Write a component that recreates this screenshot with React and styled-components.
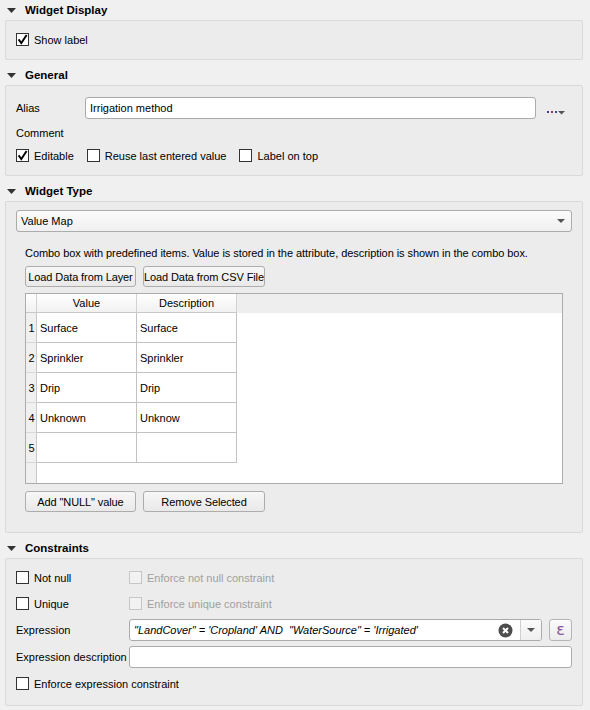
import React from 'react'
import styled, { createGlobalStyle } from 'styled-components'

const GlobalStyle = createGlobalStyle`
    html, body {
        margin: 0;
        background: #f0f0f0;
    }
    body {
        font-family: "Liberation Sans", Arial, sans-serif;
        font-size: 11px;
        color: #000;
    }
`

const Page = styled.div`
    width: 590px;
    height: 710px;
    overflow: hidden;
    box-sizing: border-box;
    padding: 0 7px 0 5px;
    margin-top: -1px;
`
const Section = styled.section`
    margin-top: 4px;
    &:first-child {
        margin-top: 0;
    }
`
const SectionHeader = styled.div`
    height: 21px;
    display: flex;
    align-items: center;
    padding-left: 2px;
`
const Caret = styled.svg`
    width: 9px;
    height: 5px;
    margin-right: 9px;
    margin-top: 1px;
`
const SectionTitle = styled.span`
    font-weight: bold;
    font-size: 11.5px;
`
const GroupBox = styled.div`
    background: #ececec;
    border: 1px solid #d9d9d9;
    border-radius: 2px;
    padding: ${p => p.$pad};
`
const Row = styled.div`
    display: flex;
    align-items: center;
    height: ${p => p.$h || 21}px;
    margin-top: ${p => p.$mt || 0}px;
    gap: ${p => p.$gap || 0}px;
`
const Label = styled.span`
    width: ${p => p.$w}px;
    flex: none;
    line-height: 16px;
    white-space: nowrap;
`
const CheckWrap = styled.label`
    display: inline-flex;
    align-items: center;
    gap: 5px;
    color: ${p => (p.$disabled ? '#a0a0a0' : '#000')};
    white-space: nowrap;
`
const Box = styled.span`
    width: 13px;
    height: 13px;
    box-sizing: border-box;
    border: 1px solid ${p => (p.$disabled ? '#c6c6c6' : '#333')};
    background: ${p => (p.$disabled ? '#f2f2f2' : '#fff')};
    display: inline-flex;
    align-items: center;
    justify-content: center;
    flex: none;
`
const TextInput = styled.div`
    flex: 1;
    height: 22px;
    box-sizing: border-box;
    background: #fff;
    border: 1px solid #ababab;
    border-radius: 3px;
    padding: 0 4px;
    display: flex;
    align-items: center;
`
const MoreButton = styled.div`
    width: 32px;
    flex: none;
    display: flex;
    align-items: center;
    justify-content: center;
    padding-top: 8px;
    padding-left: 4px;
`
const Combo = styled.div`
    height: 22px;
    box-sizing: border-box;
    border: 1px solid #acacac;
    border-radius: 3px;
    background: linear-gradient(#fbfbfb, #f0f0f0);
    display: flex;
    align-items: center;
    justify-content: space-between;
    padding: 0 6px 0 4px;
`
const Inner = styled.div`
    padding: 0 9px;
`
const Hint = styled.div`
    margin-top: 13px;
    line-height: 16px;
    letter-spacing: -0.06px;
    white-space: nowrap;
`
const ButtonRow = styled.div`
    display: flex;
    gap: 7px;
    margin-top: ${p => p.$mt}px;
`
const Button = styled.div`
    width: ${p => p.$w}px;
    height: 21px;
    box-sizing: border-box;
    border: 1px solid #adadad;
    border-radius: 3px;
    background: linear-gradient(#f7f7f7, #e9e9e9);
    display: flex;
    align-items: center;
    justify-content: center;
    white-space: nowrap;
    letter-spacing: -0.1px;
`
const Table = styled.div`
    margin-top: 6px;
    height: 191px;
    box-sizing: border-box;
    border: 1px solid #acacac;
    background: #fff;
    display: grid;
    grid-template-columns: 11px 100px 100px 1fr;
    grid-template-rows: 19px repeat(5, 30px) 1fr;
`
const HeadCell = styled.div`
    background: ${p => (p.$blank ? '#eeeeee' : 'linear-gradient(#ffffff, #f1f1f1)')};
    border-right: ${p => (p.$blank ? 'none' : '1px solid #d2d2d2')};
    border-bottom: ${p => (p.$blank ? 'none' : '1px solid #c8c8c8')};
    display: flex;
    align-items: center;
    justify-content: center;
`
const RowNum = styled.div`
    background: #f0f0f0;
    border-right: 1px solid #c8c8c8;
    border-bottom: ${p => (p.$last ? 'none' : '1px solid #d8d8d8')};
    display: flex;
    align-items: center;
    justify-content: center;
    padding-left: 1px;
`
const Cell = styled.div`
    border-right: 1px solid #c2c2c2;
    border-bottom: 1px solid #c2c2c2;
    display: flex;
    align-items: center;
    padding-left: 3px;
`
const Empty = styled.div``
const FormGrid = styled.div`
    display: grid;
    grid-template-columns: 113px 1fr;
    grid-template-rows: 21px 21px 22px 22px 21px;
    row-gap: 5px;
    align-items: center;
`
const FieldRow = styled.div`
    display: flex;
    gap: 7px;
    height: 22px;
`
const ExprBox = styled.div`
    flex: 1;
    height: 22px;
    box-sizing: border-box;
    border: 1px solid #ababab;
    border-radius: 3px;
    background: #fff;
    display: flex;
    align-items: center;
    overflow: hidden;
`
const ExprText = styled.span`
    flex: 1;
    font-style: italic;
    white-space: pre;
    padding-left: 4px;
`
const ClearIcon = styled.svg`
    width: 15px;
    height: 15px;
    margin-right: 7px;
`
const ExprDrop = styled.div`
    width: 20px;
    height: 100%;
    border-left: 1px solid #d0d0d0;
    background: linear-gradient(#fbfbfb, #efefef);
    display: flex;
    align-items: center;
    justify-content: center;
`
const EpsButton = styled.div`
    width: 23px;
    height: 22px;
    box-sizing: border-box;
    border: 1px solid #b5b5b5;
    border-radius: 3px;
    background: linear-gradient(#fbfbfb, #ececec);
    display: flex;
    align-items: center;
    justify-content: center;
    color: #86569a;
    font-family: "DejaVu Sans", sans-serif;
    font-size: 16px;
    line-height: 1;
`

const DownArrow = () => (
    <svg width="8" height="4" viewBox="0 0 8 4">
        <path d="M0 0 H8 L4 4 Z" fill="#555" />
    </svg>
)

const Tick = () => (
    <svg width="11" height="11" viewBox="0 0 11 11">
        <path d="M1.6 5.4 L4.3 9 L9.6 1" fill="none" stroke="#000" strokeWidth="1.9" />
    </svg>
)

const CheckBox = ({ checked, disabled, children }) => (
    <CheckWrap $disabled={disabled}>
        <Box $disabled={disabled}>{checked && <Tick />}</Box>
        {children}
    </CheckWrap>
)

const Header = ({ title }) => (
    <SectionHeader>
        <Caret viewBox="0 0 9 5">
            <path d="M0 0 H9 L4.5 5 Z" fill="#333" />
        </Caret>
        <SectionTitle>{title}</SectionTitle>
    </SectionHeader>
)

const rows = [
    ['Surface', 'Surface'],
    ['Sprinkler', 'Sprinkler'],
    ['Drip', 'Drip'],
    ['Unknown', 'Unknow'],
    ['', ''],
]

const App = () => {
    return (
        <Page>
            <GlobalStyle />
            <Section>
                <Header title="Widget Display" />
                <GroupBox $pad="8px 10px 9px">
                    <Row>
                        <CheckBox checked>Show label</CheckBox>
                    </Row>
                </GroupBox>
            </Section>

            <Section>
                <Header title="General" />
                <GroupBox $pad="11px 10px 9px">
                    <Row $h={22}>
                        <Label $w={69}>Alias</Label>
                        <TextInput>Irrigation method</TextInput>
                        <MoreButton>
                            <svg width="18" height="5" viewBox="0 0 18 5">
                                <rect x="0" y="1" width="2" height="2" fill="#4a3aa0" />
                                <rect x="4" y="1" width="2" height="2" fill="#7a3a6a" />
                                <rect x="8" y="1" width="2" height="2" fill="#3a4aa0" />
                                <path d="M11 1 H18 L14.5 4.5 Z" fill="#555" />
                            </svg>
                        </MoreButton>
                    </Row>
                    <Row $h={16} $mt={6}>
                        <Label>Comment</Label>
                    </Row>
                    <Row $mt={4} $gap={13}>
                        <CheckBox checked>Editable</CheckBox>
                        <CheckBox>Reuse last entered value</CheckBox>
                        <CheckBox>Label on top</CheckBox>
                    </Row>
                </GroupBox>
            </Section>

            <Section>
                <Header title="Widget Type" />
                <GroupBox $pad="8px 10px 20px">
                    <Combo>
                        <span>Value Map</span>
                        <DownArrow />
                    </Combo>
                    <Inner>
                        <Hint>
                            Combo box with predefined items. Value is stored in the attribute, description is shown in the combo box.
                        </Hint>
                        <ButtonRow $mt={5}>
                            <Button $w={111}>Load Data from Layer</Button>
                            <Button $w={122}>Load Data from CSV File</Button>
                        </ButtonRow>
                        <Table>
                            <HeadCell />
                            <HeadCell>Value</HeadCell>
                            <HeadCell>Description</HeadCell>
                            <HeadCell $blank />
                            {rows.map(([value, desc], i) => (
                                <React.Fragment key={i}>
                                    <RowNum>{i + 1}</RowNum>
                                    <Cell>{value}</Cell>
                                    <Cell>{desc}</Cell>
                                    <Empty />
                                </React.Fragment>
                            ))}
                            <RowNum $last />
                        </Table>
                        <ButtonRow $mt={7}>
                            <Button $w={111}>Add "NULL" value</Button>
                            <Button $w={122}>Remove Selected</Button>
                        </ButtonRow>
                    </Inner>
                </GroupBox>
            </Section>

            <Section>
                <Header title="Constraints" />
                <GroupBox $pad="8px 10px 11px">
                    <FormGrid>
                        <CheckBox>Not null</CheckBox>
                        <CheckBox disabled>Enforce not null constraint</CheckBox>
                        <CheckBox>Unique</CheckBox>
                        <CheckBox disabled>Enforce unique constraint</CheckBox>
                        <Label>Expression</Label>
                        <FieldRow>
                            <ExprBox>
                                <ExprText>"LandCover" = 'Cropland' AND  "WaterSource" = 'Irrigated'</ExprText>
                                <ClearIcon viewBox="0 0 15 15">
                                    <circle cx="7.5" cy="7.5" r="7" fill="#4d4d4d" />
                                    <path d="M5 5 L10 10 M10 5 L5 10" stroke="#fff" strokeWidth="2" />
                                </ClearIcon>
                                <ExprDrop>
                                    <DownArrow />
                                </ExprDrop>
                            </ExprBox>
                            <EpsButton>ɛ</EpsButton>
                        </FieldRow>
                        <Label>Expression description</Label>
                        <TextInput />
                        <CheckBox>Enforce expression constraint</CheckBox>
                    </FormGrid>
                </GroupBox>
            </Section>
        </Page>
    )
}

export default App
